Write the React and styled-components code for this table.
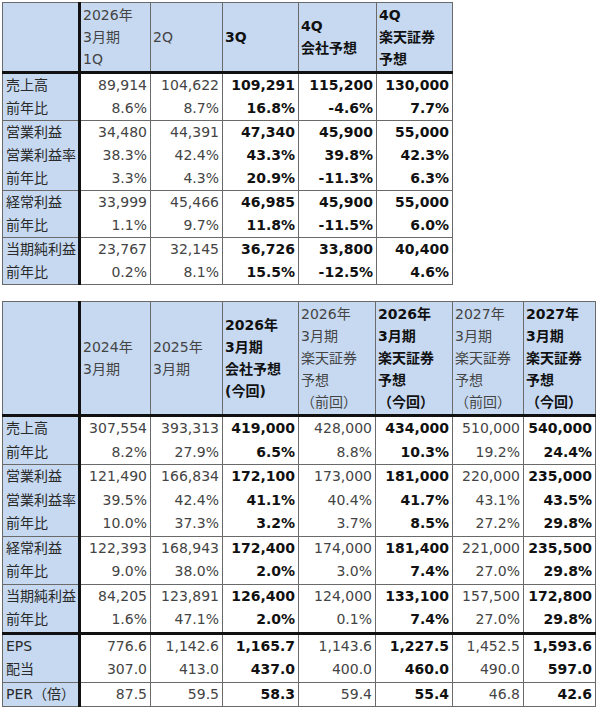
import React from 'react';
import styled, { createGlobalStyle } from 'styled-components';

const GlobalStyle = createGlobalStyle`
  html, body {
    margin: 0;
    padding: 0;
    background: #fff;
  }

  body {
    font-family: "DejaVu Sans", "Noto Sans CJK JP", sans-serif;
    font-size: 14px;
    color: #3c3c3c;
  }
`;

const Page = styled.div`
  display: flex;
  flex-direction: column;
  align-items: flex-start;
  gap: 16px;
  padding: 2px 0 0 2px;
`;

const Sheet = styled.table`
  border-collapse: collapse;
  table-layout: fixed;
  border: 1px solid #6a6a6a;
`;

const HeadCell = styled.th`
  background: #c6d9f1;
  border-left: 1px solid #6a6a6a;
  border-right: 1px solid #6a6a6a;
  border-bottom: 3px solid #111;
  padding: 1px 2px;
  text-align: left;
  vertical-align: middle;
  line-height: 22px;
  white-space: pre-line;
  font-weight: ${({ $bold }) => ($bold ? 700 : 400)};
  color: ${({ $bold }) => ($bold ? '#111' : '#444')};

  &:first-child {
    border-right: 3px solid #111;
  }
`;

const LabelCell = styled.td`
  background: #c6d9f1;
  border-right: 3px solid #111;
  border-top: ${({ $top }) => $top || 'none'};
  padding: 0 3px;
  line-height: ${({ $row }) => $row}px;
  white-space: nowrap;
  color: #2a2a2a;
`;

const ValueCell = styled.td`
  border-left: 1px solid #6a6a6a;
  border-right: 1px solid #6a6a6a;
  border-top: ${({ $top }) => $top || 'none'};
  padding: 0 3px 0 0;
  line-height: ${({ $row }) => $row}px;
  text-align: right;
  white-space: nowrap;
  font-weight: ${({ $bold }) => ($bold ? 700 : 400)};
  color: ${({ $bold }) => ($bold ? '#111' : '#444')};
`;

const edge = {
  thin: '1px solid #6a6a6a',
  thick: '3px solid #111',
};

const quarterCols = [77, 71, 72, 76, 78, 76];
const quarterBold = [3, 4, 5];
const quarterHead = ['', '2026年\n3月期\n1Q', '2Q', '3Q', '4Q\n会社予想', '4Q\n楽天証券\n予想'];
const quarterRows = [
  ['thin', '売上高', '89,914', '104,622', '109,291', '115,200', '130,000'],
  [null, '前年比', '8.6%', '8.7%', '16.8%', '-4.6%', '7.7%'],
  ['thin', '営業利益', '34,480', '44,391', '47,340', '45,900', '55,000'],
  [null, '営業利益率', '38.3%', '42.4%', '43.3%', '39.8%', '42.3%'],
  [null, '前年比', '3.3%', '4.3%', '20.9%', '-11.3%', '6.3%'],
  ['thin', '経常利益', '33,999', '45,466', '46,985', '45,900', '55,000'],
  [null, '前年比', '1.1%', '9.7%', '11.8%', '-11.5%', '6.0%'],
  ['thin', '当期純利益', '23,767', '32,145', '36,726', '33,800', '40,400'],
  [null, '前年比', '0.2%', '8.1%', '15.5%', '-12.5%', '4.6%'],
];

const yearCols = [77, 71, 72, 76, 77, 77, 71, 72];
const yearBold = [3, 5, 7];
const yearHead = [
  '',
  '2024年\n3月期',
  '2025年\n3月期',
  '2026年\n3月期\n会社予想\n(今回)',
  '2026年\n3月期\n楽天証券\n予想\n（前回）',
  '2026年\n3月期\n楽天証券\n予想\n（今回）',
  '2027年\n3月期\n楽天証券\n予想\n（前回）',
  '2027年\n3月期\n楽天証券\n予想\n（今回）',
];
const yearRows = [
  ['thin', '売上高', '307,554', '393,313', '419,000', '428,000', '434,000', '510,000', '540,000'],
  [null, '前年比', '8.2%', '27.9%', '6.5%', '8.8%', '10.3%', '19.2%', '24.4%'],
  ['thin', '営業利益', '121,490', '166,834', '172,100', '173,000', '181,000', '220,000', '235,000'],
  [null, '営業利益率', '39.5%', '42.4%', '41.1%', '40.4%', '41.7%', '43.1%', '43.5%'],
  [null, '前年比', '10.0%', '37.3%', '3.2%', '3.7%', '8.5%', '27.2%', '29.8%'],
  ['thin', '経常利益', '122,393', '168,943', '172,400', '174,000', '181,400', '221,000', '235,500'],
  [null, '前年比', '9.0%', '38.0%', '2.0%', '3.0%', '7.4%', '27.0%', '29.8%'],
  ['thin', '当期純利益', '84,205', '123,891', '126,400', '124,000', '133,100', '157,500', '172,800'],
  [null, '前年比', '1.6%', '47.1%', '2.0%', '0.1%', '7.4%', '27.0%', '29.8%'],
  ['thick', 'EPS', '776.6', '1,142.6', '1,165.7', '1,143.6', '1,227.5', '1,452.5', '1,593.6'],
  [null, '配当', '307.0', '413.0', '437.0', '400.0', '460.0', '490.0', '597.0'],
  ['thin', 'PER（倍）', '87.5', '59.5', '58.3', '59.4', '55.4', '46.8', '42.6'],
];

const EarningsTable = ({ cols, head, rows, bold, row }) => (
  <Sheet style={{ width: cols.reduce((a, b) => a + b, 0) }}>
    <colgroup>
      {cols.map((w, i) => <col key={i} style={{ width: w }} />)}
    </colgroup>
    <thead>
      <tr>
        {head.map((h, i) => (
          <HeadCell key={i} $bold={bold.includes(i)}>{h}</HeadCell>
        ))}
      </tr>
    </thead>
    <tbody>
      {rows.map(([top, label, ...values], r) => (
        <tr key={r}>
          <LabelCell $top={top && edge[top]} $row={row}>{label}</LabelCell>
          {values.map((v, i) => (
            <ValueCell key={i} $top={top && edge[top]} $row={row} $bold={bold.includes(i + 1)}>
              {v}
            </ValueCell>
          ))}
        </tr>
      ))}
    </tbody>
  </Sheet>
);

const App = () => (
  <>
    <GlobalStyle />
    <Page>
      <EarningsTable cols={quarterCols} head={quarterHead} rows={quarterRows} bold={quarterBold} row={23} />
      <EarningsTable cols={yearCols} head={yearHead} rows={yearRows} bold={yearBold} row={23.5} />
    </Page>
  </>
);

export default App;
